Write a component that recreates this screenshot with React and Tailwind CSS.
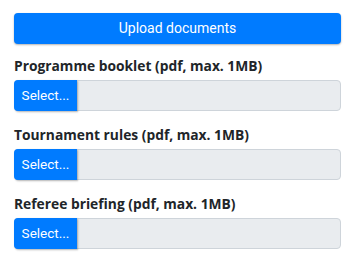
export default function App() {
  const items = [
    "Programme booklet (pdf, max. 1MB)",
    "Tournament rules (pdf, max. 1MB)",
    "Referee briefing (pdf, max. 1MB)",
  ];
  return (
    <div className="w-[355px] h-[263px] bg-white px-[14px] pt-[13px]" style={{ fontFamily: 'Roboto, sans-serif' }}>
      <button className="w-full h-[31px] rounded-[4px] bg-[#007bff] text-white text-[14px] shadow-[0_1px_2px_rgba(0,0,0,0.3)] flex items-center justify-center">
        Upload documents
      </button>
      {items.map((t, i) => (
        <div key={i} className={i === 0 ? "mt-[12px]" : "mt-[14px]"}>
          <div className="text-[13.8px] font-bold text-[#212529] leading-[20px]" style={{ fontFamily: '"Open Sans", sans-serif' }}>{t}</div>
          <div className="mt-[4px] h-[31px] flex rounded-[4px] border border-[#ced4da] bg-[#e9ecef]">
            <div className="w-[63px] -m-px h-[31px] bg-[#007bff] text-white text-[13.5px] flex items-center justify-center rounded-l-[4px] shadow-[1px_1px_2px_rgba(0,0,0,0.3)]">
              Select...
            </div>
          </div>
        </div>
      ))}
    </div>
  );
}
